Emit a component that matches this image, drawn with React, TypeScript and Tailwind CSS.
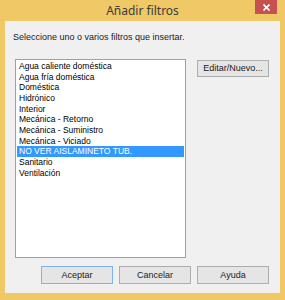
const filtros = [
    "Agua caliente doméstica",
    "Agua fría doméstica",
    "Doméstica",
    "Hidrónico",
    "Interior",
    "Mecánica - Retorno",
    "Mecánica - Suministro",
    "Mecánica - Viciado",
    "NO VER AISLAMINETO TUB.",
    "Sanitario",
    "Ventilación",
];

const seleccionado = "NO VER AISLAMINETO TUB.";

const font = { fontFamily: '"Liberation Sans", Arial, sans-serif' };

const Boton = ({ label, primary = false }: { label: string; primary?: boolean }) => (
    <button
        className={
            primary
                ? "w-[72px] h-[18px] border border-[#7eb4ea] bg-[#e5e5e5] text-[9px] leading-none text-[#1a1a1a]"
                : "w-[72px] h-[18px] border border-[#adadad] bg-[#e5e5e5] text-[9px] leading-none text-[#1a1a1a]"
        }
    >
        {label}
    </button>
);

export default function App() {
    return (
        <div
            className="w-[285px] h-[300px] bg-[#f0c866] flex flex-col"
            style={font}
        >
            {/* Title bar */}
            <div className="relative h-[21px] flex items-center justify-center">
                <span className="text-[12px] text-[#3c3c3c] mt-[1px]" style={{ fontFamily: '"Noto Sans", sans-serif' }}>
                    Añadir filtros
                </span>
                <div className="absolute left-[255px] top-0 w-[22px] h-[14px] bg-[#c75050] flex items-center justify-center">
                    <svg width="7" height="7" viewBox="0 0 7 7">
                        <path d="M0.5 0.5 L6.5 6.5 M6.5 0.5 L0.5 6.5" stroke="#fff" strokeWidth="1.6" />
                    </svg>
                </div>
            </div>

            {/* Client area */}
            <div className="mx-[5px] mb-[7px] flex-1 bg-[#f0f0f0] flex flex-col pt-[11px]">
                <div className="ml-[8px] h-[10px] leading-[10px] text-[9px] text-[#1a1a1a]">
                    Seleccione uno o varios filtros que insertar.
                </div>

                <div className="flex mt-[17px]">
                    <div className="ml-[10px] w-[171px] h-[199px] border border-[#a0a0a0] bg-white pt-[1px] px-[1px]">
                        {filtros.map((f) => (
                            <div
                                key={f}
                                className={
                                    f === seleccionado
                                        ? "h-[10.67px] leading-[10.67px] text-[8.5px] pl-[2px] bg-[#3399ff] text-white"
                                        : "h-[10.67px] leading-[10.67px] text-[8.5px] pl-[2px] text-black"
                                }
                            >
                                {f}
                            </div>
                        ))}
                    </div>
                    <button className="ml-[11px] mt-[1px] w-[72px] h-[17px] border border-[#adadad] bg-[#e5e5e5] text-[9px] leading-none text-[#1a1a1a]">
                        Editar/Nuevo...
                    </button>
                </div>

                <div className="flex justify-end gap-[6px] pr-[11px] mt-[8px]">
                    <Boton label="Aceptar" primary />
                    <Boton label="Cancelar" />
                    <Boton label="Ayuda" />
                </div>
            </div>
        </div>
    );
}
